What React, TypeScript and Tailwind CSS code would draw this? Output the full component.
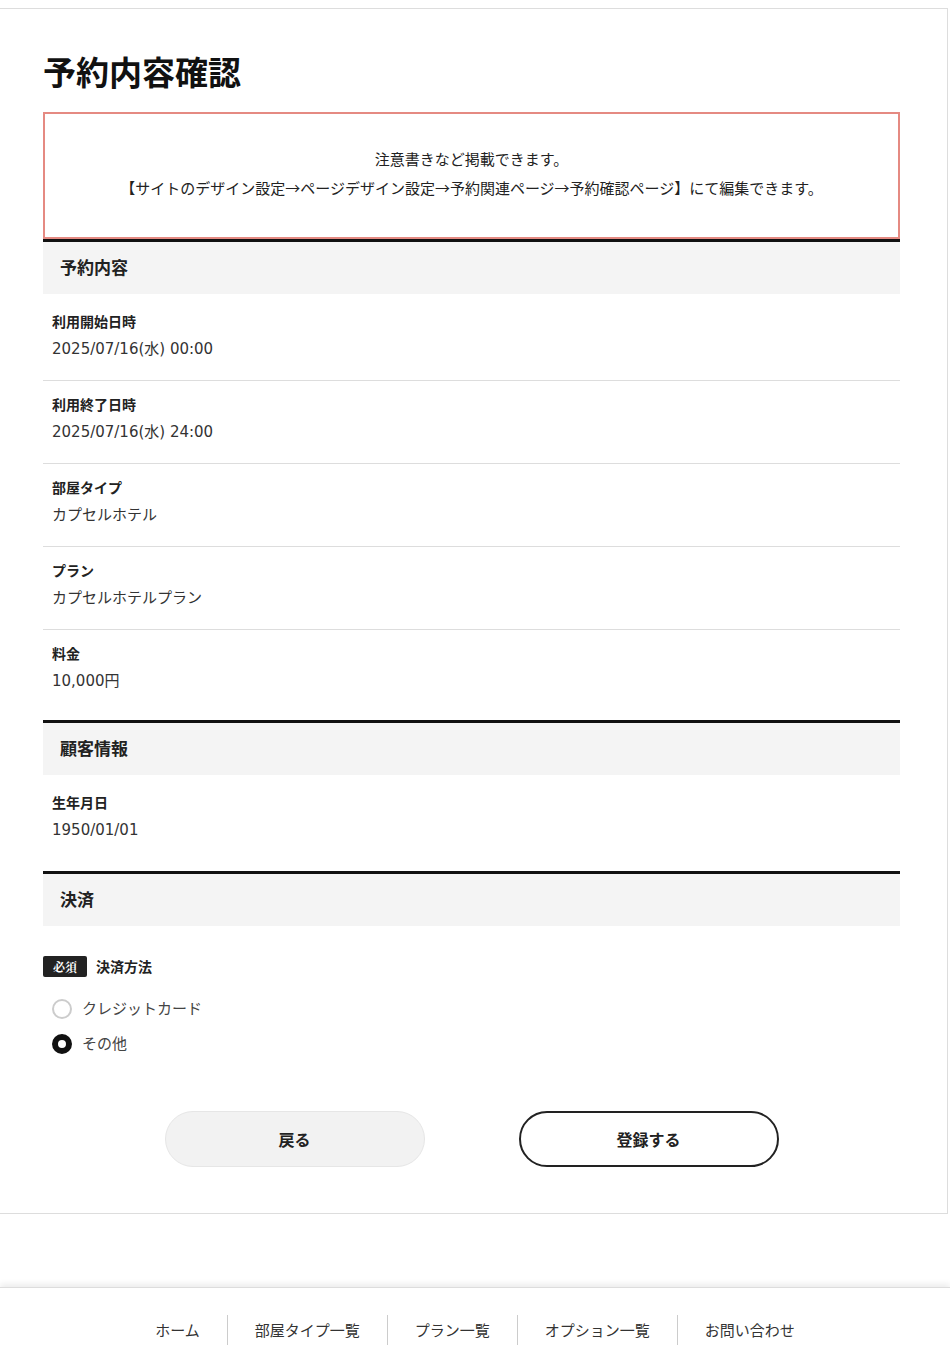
import React from 'react';

const font = { fontFamily: '"Noto Sans CJK JP", "Noto Sans", sans-serif' };
const valueFont = { fontFamily: '"DejaVu Sans", "Noto Sans CJK JP", sans-serif' };

const SectionHeader: React.FC<{ title: string }> = ({ title }) => (
  <div className="border-t-[3px] border-[#111] bg-[#f4f4f4] h-[55px] pb-[3px] flex items-center px-[17px]">
    <h2 className="text-[17px] font-bold text-[#222]">{title}</h2>
  </div>
);

const Row: React.FC<{ label: string; value: string; last?: boolean }> = ({ label, value, last }) => (
  <div className={`px-[9px] pt-[11px] h-[83px] ${last ? '' : 'border-b border-[#ddd]'}`}>
    <div className="text-[14px] font-bold text-[#222] leading-[24px]">{label}</div>
    <div className="text-[15px] text-[#333] leading-[32px]" style={valueFont}>
      {value}
    </div>
  </div>
);

const Radio: React.FC<{ label: string; checked?: boolean }> = ({ label, checked }) => (
  <label className="flex items-center gap-[10px] h-[35px]">
    <span
      className={`w-[20px] h-[20px] rounded-full ${checked ? 'border-[6px] border-[#111]' : 'border-2 border-[#ccc]'} bg-white`}
    />
    <span className="text-[15px] text-[#444]">{label}</span>
  </label>
);

const navItems = ['ホーム', '部屋タイプ一覧', 'プラン一覧', 'オプション一覧', 'お問い合わせ'];

const App: React.FC = () => {
  return (
    <div className="min-h-screen bg-white" style={font}>
      <div className="h-[8px]" />
      <main className="w-[948px] border-t border-r border-b border-[#ddd] px-[43px] pt-[38px] pb-[46px]">
        <h1 className="text-[33px] font-bold text-[#111] leading-[48px] mb-[17px]">予約内容確認</h1>

        <div className="w-[857px]">
          <div className="border-2 border-[#e58a82] h-[127px] pb-[4px] flex flex-col items-center justify-center gap-[7px] text-[15px] text-[#222]">
            <p>注意書きなど掲載できます。</p>
            <p>【サイトのデザイン設定→ページデザイン設定→予約関連ページ→予約確認ページ】にて編集できます。</p>
          </div>

          <SectionHeader title="予約内容" />
          <div className="pt-[4px] pb-[7px]">
            <Row label="利用開始日時" value="2025/07/16(水) 00:00" />
            <Row label="利用終了日時" value="2025/07/16(水) 24:00" />
            <Row label="部屋タイプ" value="カプセルホテル" />
            <Row label="プラン" value="カプセルホテルプラン" />
            <Row label="料金" value="10,000円" last />
          </div>

          <SectionHeader title="顧客情報" />
          <div className="pt-[4px] pb-[9px]">
            <Row label="生年月日" value="1950/01/01" last />
          </div>

          <SectionHeader title="決済" />
          <div className="pt-[29px]">
            <div className="flex items-center gap-[9px] h-[22px]">
              <span
                className="bg-[#222] text-white text-[12px] font-bold px-[10px] h-[21px] leading-[21px] rounded-[2px]"
                style={{ fontFamily: '"Noto Serif CJK JP", "Noto Sans CJK JP", serif' }}
              >
                必須
              </span>
              <span className="text-[14px] font-bold text-[#222]">決済方法</span>
            </div>
            <div className="px-[9px] pt-[14px]">
              <Radio label="クレジットカード" />
              <Radio label="その他" checked />
            </div>
          </div>

          <div className="flex justify-center gap-[94px] mt-[50px]">
            <button className="w-[260px] h-[56px] rounded-full bg-[#f2f2f2] border border-[#e6e6e6] text-[16px] font-bold text-[#222]">
              戻る
            </button>
            <button className="w-[260px] h-[56px] rounded-full bg-white border-2 border-[#222] text-[16px] font-bold text-[#222]">
              登録する
            </button>
          </div>
        </div>
      </main>

      <footer className="mt-[73px] border-t border-[#ddd] shadow-[0_-3px_6px_rgba(0,0,0,0.08)] pt-[27px] pb-[26px]">
        <nav className="flex justify-center">
          {navItems.map((item, i) => (
            <a
              key={item}
              className={`px-[27px] h-[30px] flex items-center text-[15px] text-[#333] ${i > 0 ? 'border-l border-[#ccc]' : ''}`}
            >
              {item}
            </a>
          ))}
        </nav>
      </footer>
    </div>
  );
};

export default App;
